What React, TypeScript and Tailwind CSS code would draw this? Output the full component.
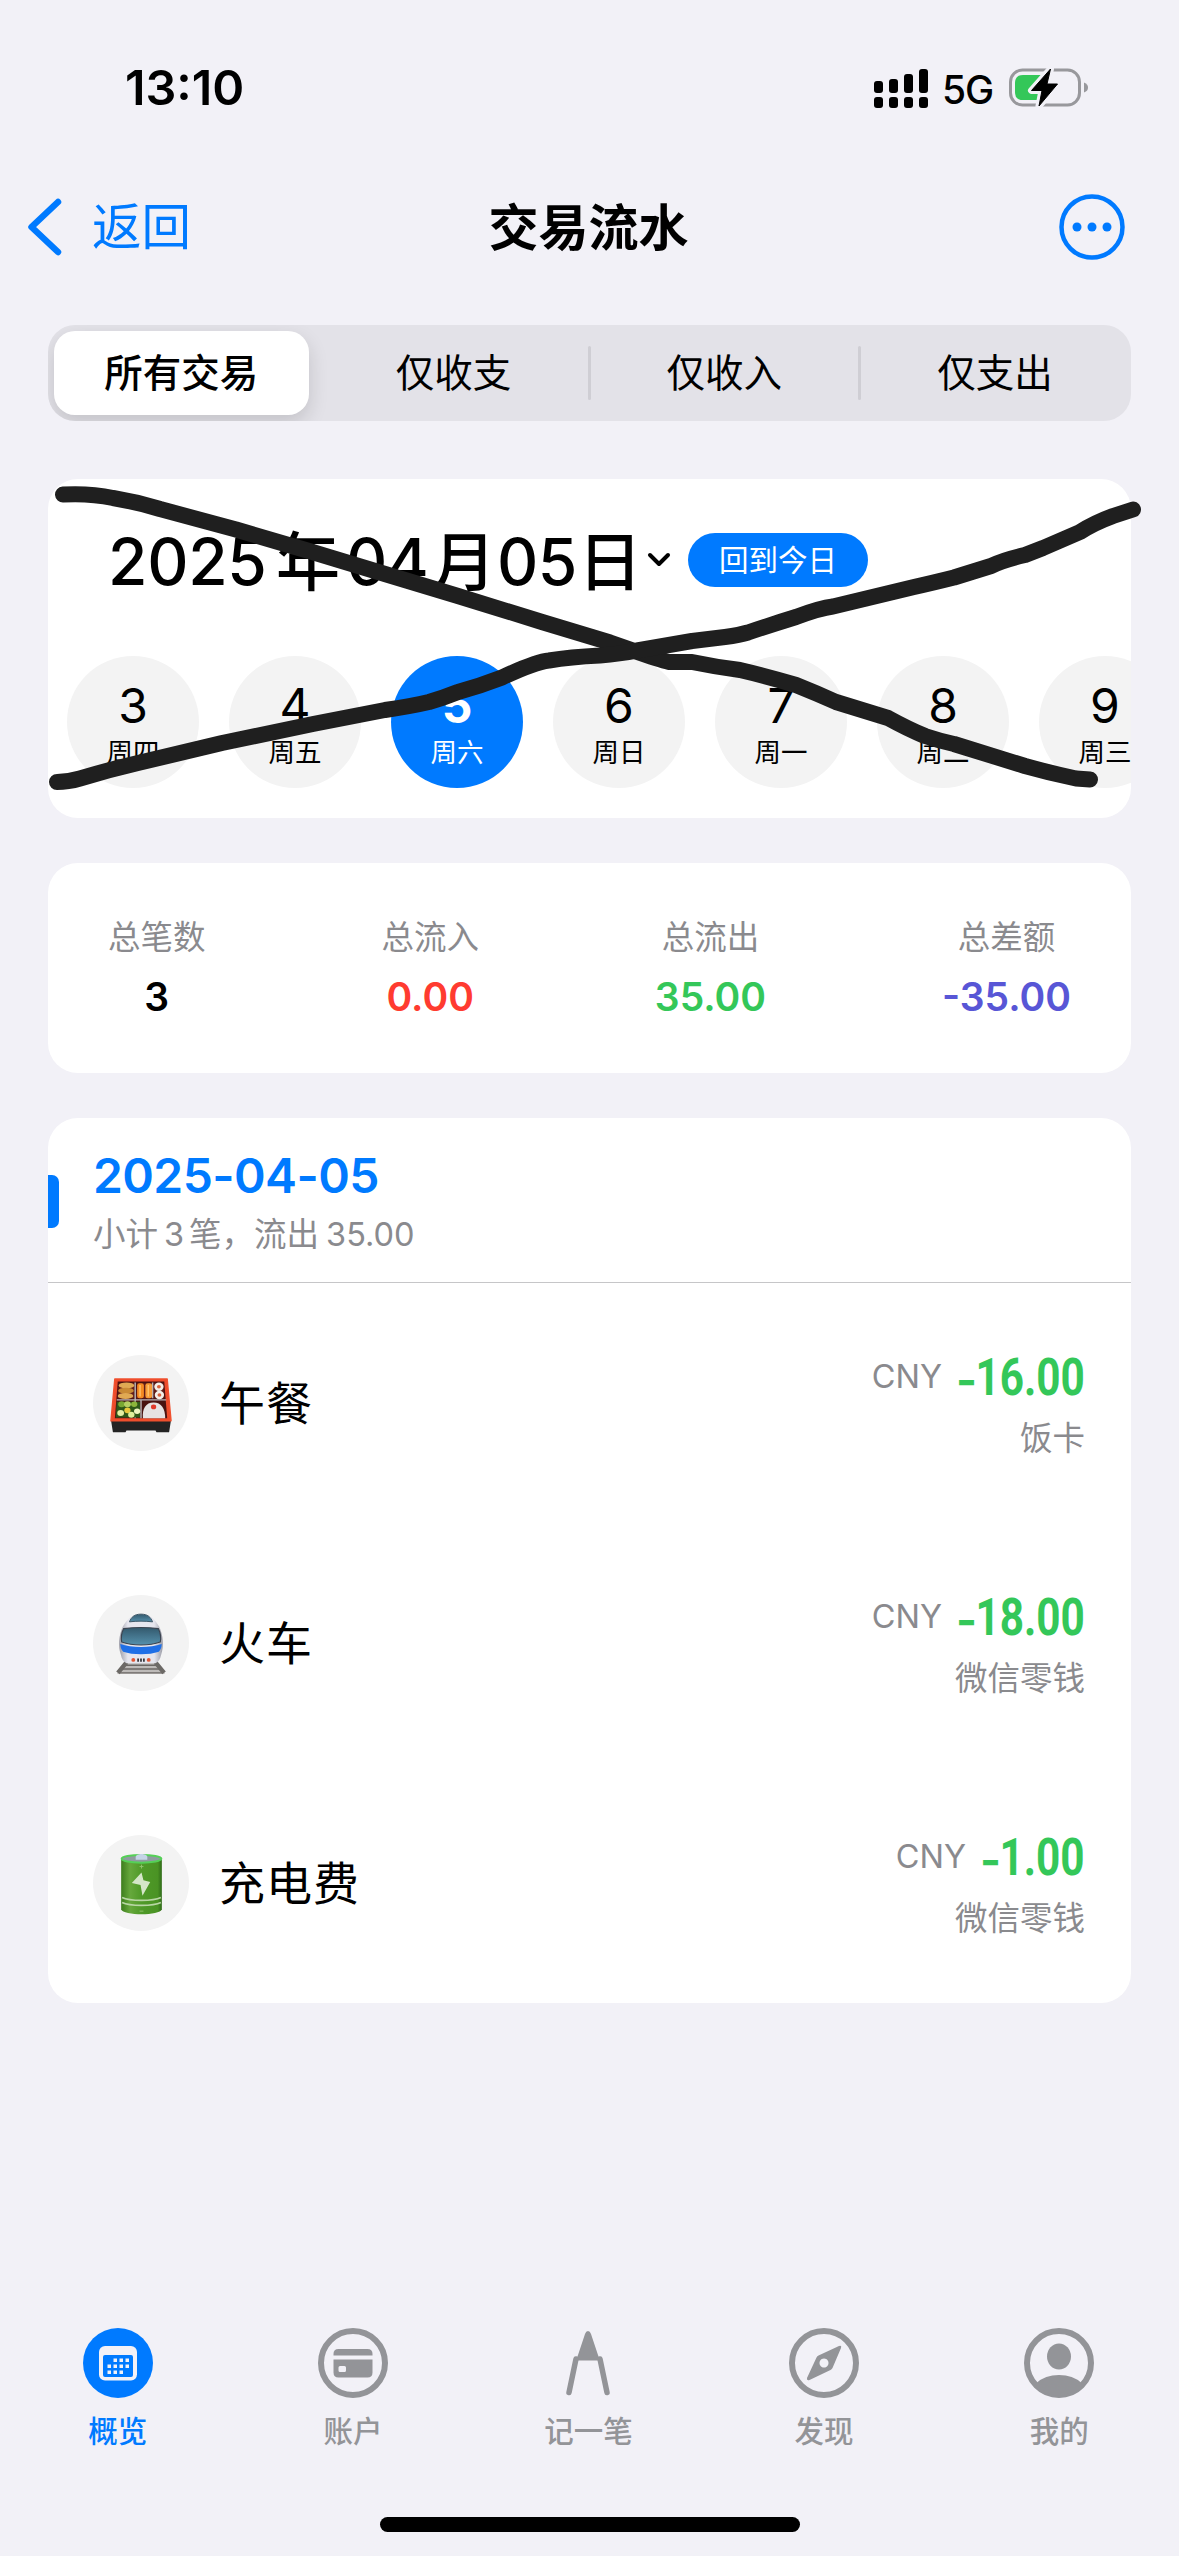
import React from "react";

const SEGMENTS = ["所有交易", "仅收支", "仅收入", "仅支出"];

const DAYS = [
  { n: "3", w: "周四" },
  { n: "4", w: "周五" },
  { n: "5", w: "周六" },
  { n: "6", w: "周日" },
  { n: "7", w: "周一" },
  { n: "8", w: "周二" },
  { n: "9", w: "周三" },
];

const TOTALS = [
  { label: "总笔数", value: "3", color: "text-black" },
  { label: "总流入", value: "0.00", color: "text-[#ff3b30]" },
  { label: "总流出", value: "35.00", color: "text-[#34c759]" },
  { label: "总差额", value: "-35.00", color: "text-[#5856d6]" },
];

function StatusBar() {
  return (
    <div className="flex h-[176px] shrink-0 items-center justify-between pl-[125px] pr-[90px]">
      <span className="text-[48.500px] font-semibold leading-none tracking-[0px]">13:10</span>
      <div className="flex items-center">
        <svg className="h-[40px] w-[54px]" viewBox="0 0 54 40">
          <rect x="0" y="13" width="9" height="12" rx="3" />
          <rect x="15" y="11" width="9" height="14" rx="3" />
          <rect x="30" y="6" width="9" height="19" rx="3" />
          <rect x="45" y="1" width="9" height="24" rx="3" />
          <rect x="0" y="29" width="9" height="11" rx="3" />
          <rect x="15" y="29" width="9" height="11" rx="3" />
          <rect x="30" y="29" width="9" height="11" rx="3" />
          <rect x="45" y="29" width="9" height="11" rx="3" />
        </svg>
        <span className="ml-[14px] mt-[3px] w-[67px] text-[39px] font-medium leading-none tracking-[-1px]">5G</span>
        <svg className="h-[42px] w-[80px]" viewBox="0 0 80 42">
          <rect x="1.5" y="3" width="69" height="35" rx="12" fill="none" stroke="#98989c" strokeWidth="3" />
          <path d="M75 15.500c3 1 4 3 4 5s-1 4-4 5z" fill="#98989c" />
          <path d="M14 8h22v25H14q-8 0-8-8v-9q0-8 8-8z" fill="#34c759" />
          <path d="M41.500 2 L22.500 23.500 h10.500 L30 39 L48.500 17 H38z" fill="#f2f1f7" stroke="#f2f1f7" strokeWidth="7" strokeLinejoin="round" />
          <path d="M41.500 2 L22.500 23.500 h10.500 L30 39 L48.500 17 H38z" fill="#000" stroke="#000" strokeWidth="1" strokeLinejoin="round" />
        </svg>
      </div>
    </div>
  );
}

function NavBar() {
  return (
    <div className="grid h-[102px] shrink-0 grid-cols-3 items-center pl-[27px] pr-[54px]">
      <div className="flex items-center text-[#007aff]">
        <svg className="h-[60px] w-[36px]" viewBox="0 0 36 60" fill="none" stroke="currentColor" strokeWidth="6.500" strokeLinecap="round" strokeLinejoin="round">
          <path d="M31 5 4.500 30 31 55" />
        </svg>
        <span className="ml-[29px] mt-[2px] text-[49.500px] leading-none">返回</span>
      </div>
      <h1 className="mt-[2px] translate-x-[12.500px] text-center text-[50px] font-semibold leading-none">交易流水</h1>
      <svg className="h-[66px] w-[66px] justify-self-end" viewBox="0 0 66 66" fill="#007aff">
        <circle cx="33" cy="33" r="30.500" fill="none" stroke="#007aff" strokeWidth="4.500" />
        <circle cx="18" cy="33" r="4.500" />
        <circle cx="33" cy="33" r="4.500" />
        <circle cx="48" cy="33" r="4.500" />
      </svg>
    </div>
  );
}

function Segmented() {
  return (
    <div className="mx-12 mt-[47px] grid h-24 shrink-0 grid-cols-4 overflow-hidden rounded-[27px] bg-[#e3e2e8]">
      {SEGMENTS.map((s, i) => (
        <div key={s} className="relative flex items-center justify-center">
          <div
            className={
              i === 0
                ? "ml-[6px] mr-[10px] flex h-[84px] w-full items-center justify-center rounded-[21px] bg-white shadow-[0_8px_20px_rgba(0,0,0,0.14)]"
                : "flex"
            }
          >
            <span className={i === 0 ? "mt-[1px] text-[38.500px] font-medium leading-none" : "mr-[1px] mt-[1px] text-[38.500px] leading-none"}>{s}</span>
          </div>
          {i > 0 && i < 3 && <i className="absolute right-[-1px] top-[21px] h-[54px] w-[3px] rounded-full bg-[#cfced4]" />}
        </div>
      ))}
    </div>
  );
}

function Scribble() {
  return (
    <svg
      className="pointer-events-none absolute left-[-48px] top-0 h-[339px] w-[1179px]"
      viewBox="0 479 1179 339"
      fill="none"
      stroke="#1f1f1f"
      strokeWidth="16"
      strokeLinecap="round"
      strokeLinejoin="round"
    >
      <path d="M63 494.500Q90 493 113 498Q137 502 160 509L236 529.500L309 551L385 574L458 596L542 622L610 642.500L633 650.500Q660 660 669 662Q683 662 692 662Q716 667 740 670Q770 677 796 685Q816 693 836 702L888 718Q908 729 925 736Q940 741 954 744L1025 766Q1050 773 1076 778.500L1090 779.500" />
      <path d="M57 782Q68 782 80 778.500Q108 770 138 763L222 743L313 724L385 710Q412 706 429 702Q443 698 458 692Q480 686 502 677.500Q535 662 549 660.500Q570 657 600 655.500Q620 654 637 650.500L692 641L725 637Q740 635 748 632.500Q770 625 796 617Q820 608 833 606.500L914 587Q932 583 954 577.500L991 566Q1003 560 1025 555L1043 548L1080 532Q1094 523 1113 516L1133 509.500" />
    </svg>
  );
}

function DateCard() {
  return (
    <section className="relative mx-12 mt-[58px] h-[339px] shrink-0">
      <div className="h-full overflow-hidden rounded-[30px] bg-white">
        <div className="flex h-[162px] items-center pl-[60px]">
          <div className="mt-[3px] flex items-center text-[64px] font-medium leading-none">
            <span className="w-[168px] tracking-[-0.300px]">2025</span>
            <span className="w-[70px]">年</span>
            <span className="w-[86px] tracking-[-0.500px]">04</span>
            <span className="w-[65px]">月</span>
            <span className="w-[81px] tracking-[-0.500px]">05</span>
            <span className="w-[64px]">日</span>
          </div>
          <svg className="ml-[5px] h-[16px] w-[24px]" viewBox="0 0 24 16" fill="none" stroke="#000" strokeWidth="4" strokeLinecap="round" strokeLinejoin="round">
            <path d="M3 3l9 9 9-9" />
          </svg>
          <span className="ml-[17px] flex h-[54px] w-[180px] items-center justify-center rounded-full bg-[#007aff] pt-[2px] text-[29.500px] leading-none text-white">回到今日</span>
        </div>
        <div className="mt-[15px] flex gap-[30px] pl-[19px]">
          {DAYS.map((d) => (
            <div
              key={d.n}
              className={
                d.n === "5"
                  ? "flex size-[132px] shrink-0 flex-col items-center rounded-full bg-[#007aff] pt-[26px] text-white"
                  : "flex size-[132px] shrink-0 flex-col items-center rounded-full bg-[#f3f3f3] pt-[26px]"
              }
            >
              <span className={d.n === "5" ? "text-[48px] font-bold leading-none" : "text-[48px] leading-none"}>{d.n}</span>
              <span className="mt-[9px] text-[26.500px] leading-none">{d.w}</span>
            </div>
          ))}
        </div>
      </div>
      <Scribble />
    </section>
  );
}

function Totals() {
  return (
    <section className="mx-12 mt-[45px] flex h-[210px] shrink-0 justify-between rounded-[30px] bg-white px-[60px] pt-[59px]">
      {TOTALS.map((t) => (
        <div key={t.label} className="flex flex-col items-center">
          <span className="text-[32.500px] leading-none text-[#8a8a8e]">{t.label}</span>
          <span className={`mt-[22px] text-[39px] font-semibold leading-none ${t.color}`}>{t.value}</span>
        </div>
      ))}
    </section>
  );
}

function BentoIcon() {
  return (
    <svg className="mt-[6px] h-[56px] w-[62px]" viewBox="0 0 64 64" preserveAspectRatio="none">
      <path d="M1 48h62l-2 14H48l-1-2H17l-1 2H3z" fill="#232323" />
      <path d="M5 1h54l4 48H1z" fill="#ee4b2b" />
      <path d="M8 4h48l3 42H5z" fill="#4a1210" />
      <path d="M9 6h16v17H8zM28 6h15l1 17H27zM45 6h10l1 17H46z" fill="#641d18" />
      <path d="M26 5v41M7 25h51M44 5v18M32 25v21" stroke="#b9b4b8" strokeWidth="1.500" />
      <ellipse cx="17" cy="8.500" rx="8" ry="3.500" fill="#e0a953" />
      <ellipse cx="16.500" cy="14.500" rx="8" ry="3.500" fill="#c98a35" />
      <ellipse cx="16" cy="20.500" rx="8" ry="3.500" fill="#e0a953" />
      <rect x="28" y="6" width="7" height="17" rx="2.500" fill="#f58a22" />
      <rect x="36.500" y="6" width="7" height="17" rx="2.500" fill="#f79a35" />
      <path d="M31 8v13M39.500 8v13" stroke="#ffc36b" strokeWidth="1.500" />
      <circle cx="50.500" cy="10" r="4.800" fill="#f4efe9" />
      <circle cx="50.500" cy="10" r="2" fill="#d9603c" />
      <circle cx="51" cy="19.500" r="4.800" fill="#f4efe9" />
      <circle cx="51" cy="19.500" r="2" fill="#d9603c" />
      <path d="M7 27h24v18H6z" fill="#2f5718" />
      <circle cx="12" cy="30" r="3.500" fill="#79a832" />
      <circle cx="18" cy="30" r="3.500" fill="#b4cf62" />
      <circle cx="25" cy="30" r="3.200" fill="#8cb53b" />
      <circle cx="11" cy="40" r="3.500" fill="#e4efa4" />
      <circle cx="18" cy="37" r="3.200" fill="#e9c83a" />
      <circle cx="22" cy="42" r="3.300" fill="#dff09b" />
      <circle cx="28" cy="38" r="3.200" fill="#eef5c0" />
      <path d="M34 46c-1-11 3-18 11-18s12 7 12 18z" fill="#e6e2e3" />
      <circle cx="45" cy="33" r="2.700" fill="#e0392b" />
      <path d="M5 1h54l4 48H1z" fill="none" stroke="#f0512f" strokeWidth="1.500" strokeLinejoin="round" />
    </svg>
  );
}

function TrainIcon() {
  return (
    <svg className="mt-[1px] h-[62px] w-[52px]" viewBox="0 0 54 64">
      <defs>
        <linearGradient id="glass" x1="0" y1="0" x2="0" y2="1">
          <stop offset="0" stopColor="#33596d" />
          <stop offset="1" stopColor="#5590ac" />
        </linearGradient>
        <linearGradient id="body" x1="0" y1="0" x2="1" y2="0">
          <stop offset="0" stopColor="#9a9ba6" />
          <stop offset=".2" stopColor="#e6e6ee" />
          <stop offset=".8" stopColor="#e6e6ee" />
          <stop offset="1" stopColor="#9a9ba6" />
        </linearGradient>
      </defs>
      <path d="M12 51h30l10 12H2z" fill="#bdbab8" />
      <path d="M11 54h32M8 58h38M5 62h44" stroke="#6b6764" strokeWidth="1.500" />
      <path d="M12 51 3 62M42 51l9 11" stroke="#6c6966" strokeWidth="4.500" />
      <path d="M27 1C37 1 41 6 46 14c4 9 5 20 2 29-1 5-3 8-6 9H12c-3-1-5-4-6-9-3-9-2-20 2-29C13 6 17 1 27 1z" fill="url(#body)" />
      <path d="M27 1c7 0 10 3 12 8-8-1-16-1-24 0 2-5 5-8 12-8z" fill="url(#glass)" stroke="#3a5363" strokeWidth="1" />
      <path d="M9 16c12-1.500 24-1.500 36 0 2 4 3 9 2 14-11 4-29 4-40 0-1-5 0-10 2-14z" fill="url(#glass)" stroke="#3b4450" strokeWidth="1.200" />
      <path d="M5.500 32c12 4 31 4 43 0 0 3-1 6-3 8-10 3.500-27 3.500-37 0-2-2-3-5-3-8z" fill="#1f6fe6" />
      <circle cx="19" cy="48.500" r="2" fill="#e25634" />
      <circle cx="35" cy="48.500" r="2" fill="#e25634" />
      <path d="M24 47v3.500M27 47v3.500M30 47v3.500" stroke="#33343a" strokeWidth="1.800" />
    </svg>
  );
}

function BatteryIcon() {
  return (
    <svg className="mt-[1px] h-[62px] w-[43px]" viewBox="0 0 44 64">
      <defs>
        <linearGradient id="cell" x1="0" y1="0" x2="1" y2="0">
          <stop offset="0" stopColor="#3d7d1d" />
          <stop offset=".22" stopColor="#66a83c" />
          <stop offset=".5" stopColor="#4f9a28" />
          <stop offset=".9" stopColor="#4a9324" />
          <stop offset="1" stopColor="#2f6a18" />
        </linearGradient>
      </defs>
      <path d="M1 6v52c2 7 40 7 42 0V6z" fill="url(#cell)" />
      <ellipse cx="22" cy="6" rx="20.500" ry="4" fill="#8f9ba0" stroke="#55d057" strokeWidth="2" />
      <path d="M16 4c0-4 12-4 12 0v3H16z" fill="#c4d4e6" />
      <path d="M20 14h4M22 12v4" stroke="#8fc26c" strokeWidth="1" />
      <path d="M22 20 12 31l9 2 2 11 8-14-7-2z" fill="#d4e6c8" />
      <path d="M2 46c8 4 32 4 40 0M2 51c8 4 32 4 40 0" fill="none" stroke="#b8d6a4" strokeWidth="1.800" />
      <path d="M20 60h4" stroke="#8fc26c" strokeWidth="1" />
    </svg>
  );
}

const ROWS = [
  { icon: <BentoIcon />, name: "午餐", amount: "16.00", box: "w-[108px]", account: "饭卡" },
  { icon: <TrainIcon />, name: "火车", amount: "18.00", box: "w-[108px]", account: "微信零钱" },
  { icon: <BatteryIcon />, name: "充电费", amount: "1.00", box: "w-[84px]", account: "微信零钱" },
];

function List() {
  return (
    <section className="mx-12 mt-[45px] flex h-[885px] shrink-0 flex-col overflow-hidden rounded-[30px] bg-white">
      <header className="flex h-[165px] shrink-0 border-b border-[#c6c6c8]">
        <i className="mt-[57px] h-[53px] w-[11px] rounded-r-[7px] bg-[#007aff]" />
        <div className="ml-[34px] flex flex-col pt-[34px]">
          <span className="text-[48px] font-semibold leading-none tracking-[-0.600px] text-[#007aff]">2025-04-05</span>
          <span className="mt-[19px] flex items-center text-[32.500px] leading-none text-[#8a8a8e]">
            <span>小计</span>
            <span className="ml-[6px] mr-[5px]">3</span>
            <span>笔，流出</span>
            <span className="ml-[7px]">35.00</span>
          </span>
        </div>
      </header>
      {ROWS.map((r) => (
        <div key={r.name} className="flex h-[240px] shrink-0 items-center pl-[45px] pr-[46px]">
          <span className="flex size-24 items-center justify-center rounded-full bg-[#f3f3f3]">{r.icon}</span>
          <span className="ml-[30px] text-[46px] leading-none tracking-[1px]">{r.name}</span>
          <div className="ml-auto flex flex-col items-end">
            <div className="flex h-[52px] items-center text-[#34c759]">
              <span className="text-[32.500px] leading-none text-[#8a8a8e]">CNY</span>
              <span className="ml-[14px] mt-[5px] w-[21px] text-[45px] font-bold leading-none">-</span>
              <span className={`mt-[2px] flex justify-end ${r.box}`}>
                <span className="origin-right scale-x-[0.83] font-['Roboto'] text-[51px] font-bold leading-none">{r.amount}</span>
              </span>
            </div>
            <span className="mt-[20px] text-[32.500px] leading-none text-[#8a8a8e]">{r.account}</span>
          </div>
        </div>
      ))}
    </section>
  );
}

const TABS = [
  {
    label: "概览",
    icon: (
      <>
        <circle cx="35" cy="35" r="35" fill="currentColor" />
        <rect x="16" y="18" width="38" height="34.500" rx="6" fill="#f2f1f7" />
        <rect x="20" y="27" width="30" height="22" rx="2" fill="#007aff" />
        <path
          fill="#f2f1f7"
          d="M30.500 30.500h3.500v3.500h-3.500zM36.500 30.500h3.500v3.500h-3.500zM42.500 30.500h3.500v3.500h-3.500zM24.500 36.500h3.500v3.500h-3.500zM30.500 36.500h3.500v3.500h-3.500zM36.500 36.500h3.500v3.500h-3.500zM42.500 36.500h3.500v3.500h-3.500zM24.500 42.500h3.500v3.500h-3.500zM30.500 42.500h3.500v3.500h-3.500zM36.500 42.500h3.500v3.500h-3.500z"
        />
      </>
    ),
  },
  {
    label: "账户",
    icon: (
      <>
        <circle cx="35" cy="35" r="32" fill="none" stroke="currentColor" strokeWidth="6" />
        <path d="M15.500 27.500v-1.500q0-5 5-5h29q5 0 5 5v1.500z" fill="currentColor" />
        <path fillRule="evenodd" d="M15.500 31.500h39v13q0 5-5 5h-29q-5 0-5-5zM22 38q-1.500 0-1.500 1.500v3q0 1.500 1.500 1.500h4.500q1.500 0 1.500-1.500v-3q0-1.500-1.500-1.500z" fill="currentColor" />
      </>
    ),
  },
  {
    label: "记一笔",
    icon: (
      <>
        <path d="M35 3q2 0 3 3l7 21 2 5.500H23L25 27 32 6q1-3 3-3z" fill="currentColor" />
        <path d="M23 31 16 64.500M47 31l7 33.500" stroke="currentColor" strokeWidth="5.500" strokeLinecap="round" />
      </>
    ),
  },
  {
    label: "发现",
    icon: (
      <>
        <circle cx="35" cy="35" r="32" fill="none" stroke="currentColor" strokeWidth="6" />
        <path
          fillRule="evenodd"
          d="M50 18q3-1 2 2L43.500 40q-1 1.500-2 2L20.500 52q-3 1-2.500-2L27.500 29.500q.7-1.300 2-2zM35 30.500a4.500 4.500 0 1 0 .01 0z"
          fill="currentColor"
        />
      </>
    ),
  },
  {
    label: "我的",
    icon: (
      <>
        <circle cx="35" cy="35" r="32" fill="none" stroke="currentColor" strokeWidth="6" />
        <ellipse cx="35" cy="28.500" rx="12" ry="13" fill="currentColor" />
        <path d="M12.500 55Q21 47 35 47t22.500 8Q48 67.500 35 67.500T12.500 55z" fill="currentColor" />
      </>
    ),
  },
];

function TabBar() {
  return (
    <nav className="mr-[2px] grid h-[189px] shrink-0 grid-cols-5">
      {TABS.map((t, i) => (
        <div key={t.label} className={i === 0 ? "flex flex-col items-center text-[#007aff]" : "flex flex-col items-center text-[#939498]"}>
          <svg className="size-[70px]" viewBox="0 0 70 70">
            {t.icon}
          </svg>
          <span className="mt-[19px] text-[29.500px] font-medium leading-none">{t.label}</span>
        </div>
      ))}
    </nav>
  );
}

export default function App() {
  return (
    <div className="flex h-[2556px] w-[1179px] flex-col overflow-hidden bg-[#f2f1f7] font-['Inter','Noto_Sans_CJK_SC',sans-serif] text-black">
      <StatusBar />
      <NavBar />
      <Segmented />
      <DateCard />
      <Totals />
      <List />
      <div className="grow" />
      <TabBar />
      <div className="mb-[24px] h-[15px] w-[420px] shrink-0 self-center rounded-full bg-black" />
    </div>
  );
}
